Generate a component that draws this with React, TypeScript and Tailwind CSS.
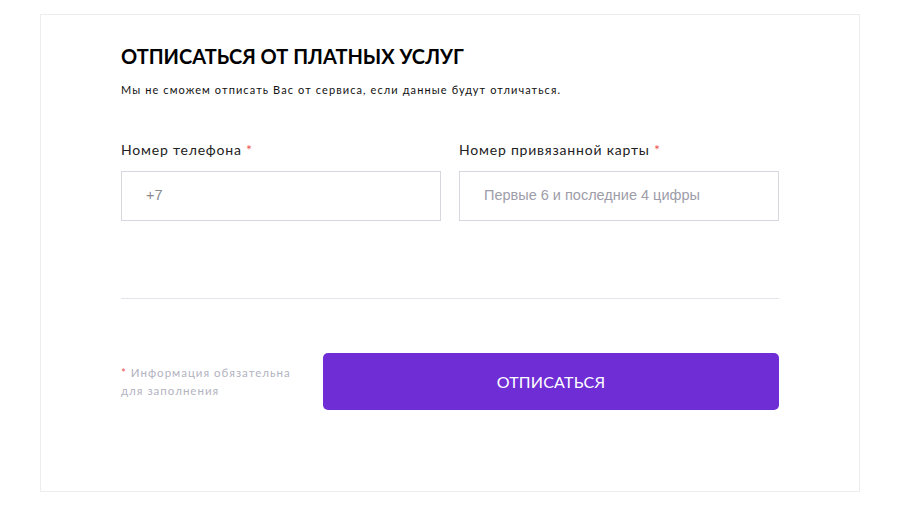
import React from "react";

export default function App() {
  const font = { fontFamily: "Lato, 'Noto Sans', sans-serif" };
  return (
    <div className="w-[920px] h-[512px] bg-white pt-[14px] pl-[40px]" style={font}>
      <div className="w-[820px] h-[478px] border border-[#ededed] px-[80px] pt-[27px]">
        <h1 className="text-[20px] leading-[28px] font-bold text-black">
          ОТПИСАТЬСЯ ОТ ПЛАТНЫХ УСЛУГ
        </h1>
        <p className="mt-[12px] text-[11px] leading-[16px] text-[#111] tracking-[1.1px]">
          Мы не сможем отписать Вас от сервиса, если данные будут отличаться.
        </p>
        <div className="mt-[43px] grid grid-cols-2 gap-x-[18px]">
          <div>
            <div className="text-[14px] leading-[18px] text-[#222] tracking-[0.8px]">
              Номер телефона <span className="text-[#f0524f]">*</span>
            </div>
            <div className="mt-[12px] h-[50px] border border-[#d7d7df] flex items-center pl-[24px] text-[14.5px] text-[#8a8a8f]" style={{ fontFamily: "'Liberation Sans', Arial, sans-serif" }}>
              +7
            </div>
          </div>
          <div>
            <div className="text-[14px] leading-[18px] text-[#222] tracking-[0.8px]">
              Номер привязанной карты <span className="text-[#f0524f]">*</span>
            </div>
            <div className="mt-[12px] h-[50px] border border-[#d7d7df] flex items-center pl-[24px] text-[14.5px] text-[#9d9daa]" style={{ fontFamily: "'Liberation Sans', Arial, sans-serif" }}>
              Первые 6 и последние 4 цифры
            </div>
          </div>
        </div>
        <div className="mt-[77px] h-px bg-[#e3e3ea]" />
        <div className="mt-[54px] flex items-center gap-[22px]">
          <div className="w-[180px] text-[11.5px] leading-[18px] text-[#b3b3bf] tracking-[1px]">
            <span className="text-[#f0524f]">*</span> Информация обязательна для заполнения
          </div>
          <button className="flex-1 h-[57px] rounded-[5px] bg-[#6f2dd6] text-white text-[16px] tracking-[0.2px]">
            ОТПИСАТЬСЯ
          </button>
        </div>
      </div>
    </div>
  );
}
